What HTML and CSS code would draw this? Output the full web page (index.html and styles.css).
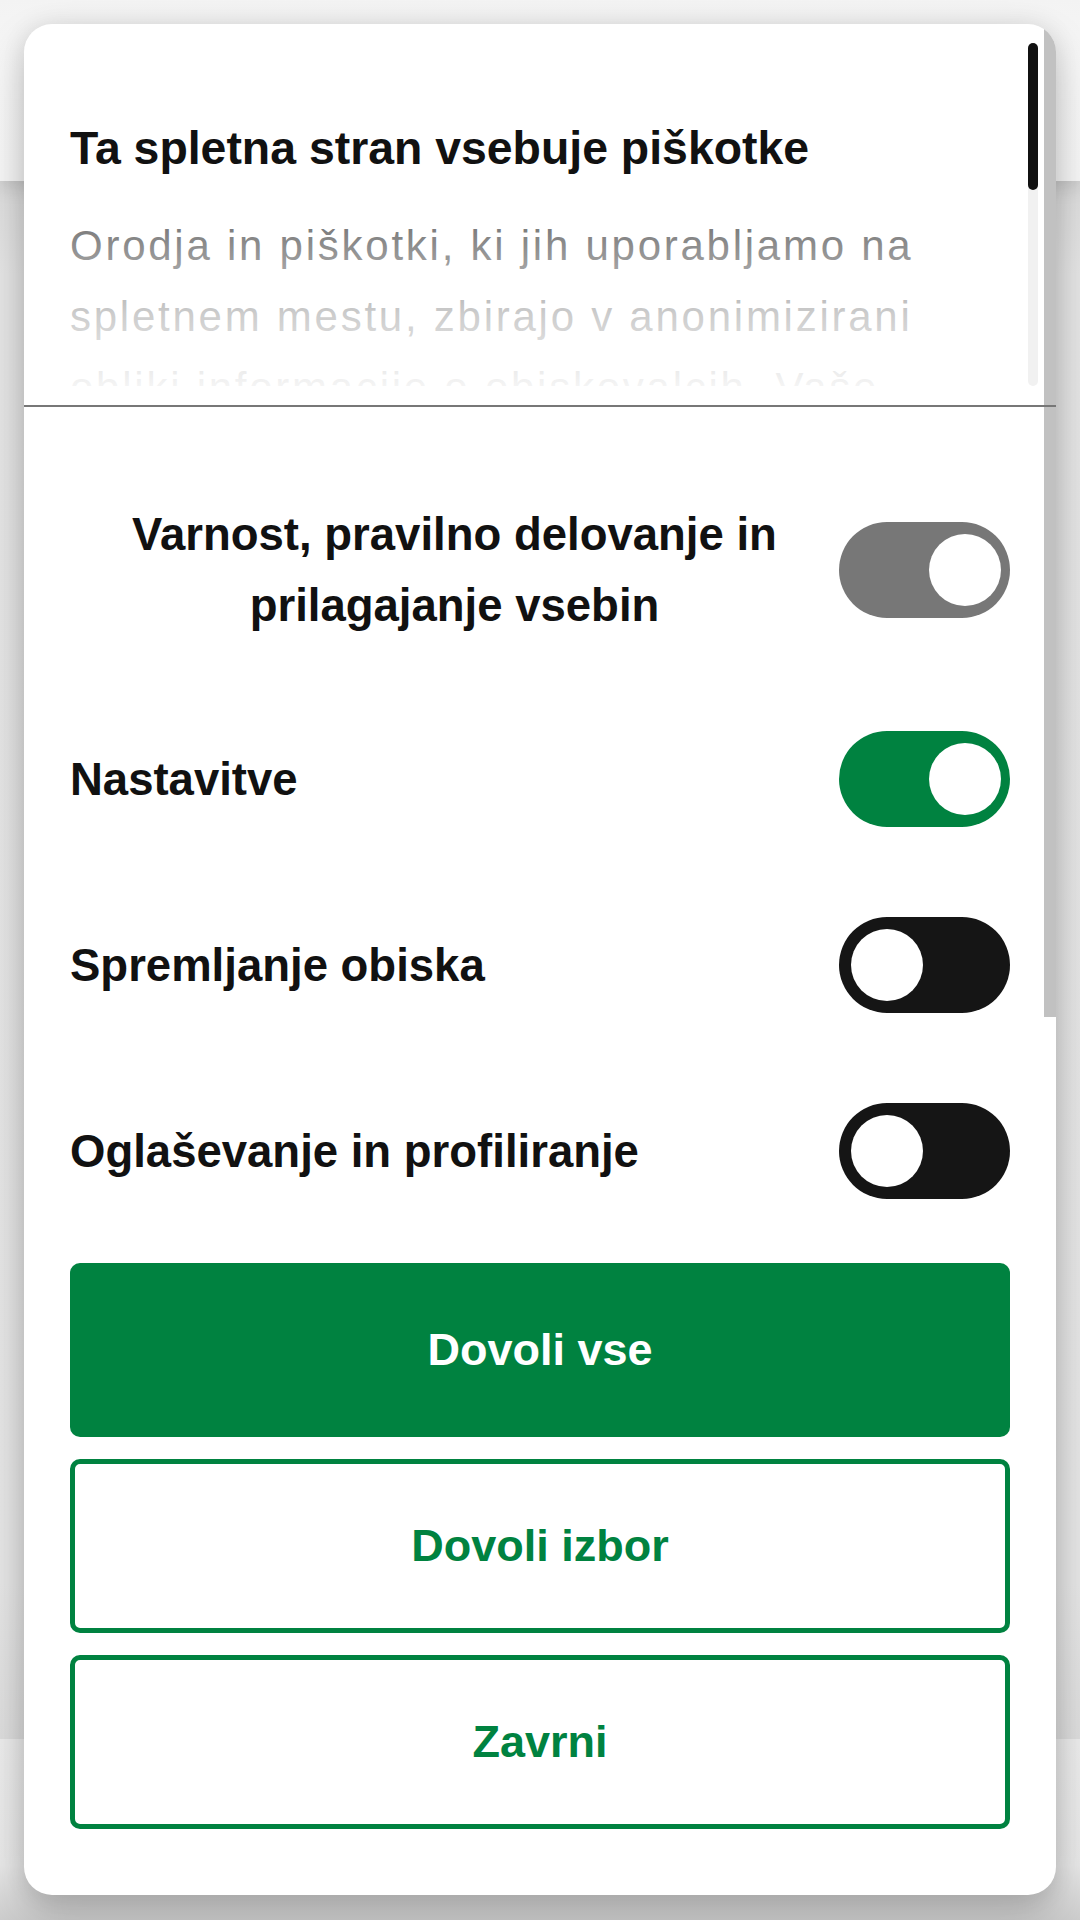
FILE: index.html
```html
<!DOCTYPE html>
<html lang="sl">
<head>
<meta charset="utf-8">
<title>Piškotki</title>
<link rel="stylesheet" href="styles.css">
</head>
<body>
<div class="page">
  <header class="page-header"></header>
  <main class="page-main"></main>
  <footer class="page-footer"></footer>
</div>

<div class="modal" role="dialog" aria-labelledby="cookie-title">
  <div class="modal-scrollbar"></div>
  <section class="intro">
    <div class="intro-text">
      <h1 id="cookie-title" class="intro-title">Ta spletna stran vsebuje piškotke</h1>
      <p class="intro-desc">Orodja in piškotki, ki jih uporabljamo na spletnem mestu, zbirajo v anonimizirani obliki informacije o obiskovalcih. Vaše soglasje lahko kadarkoli spremenite v nastavitvah.</p>
      <div class="intro-fade"></div>
    </div>
    <div class="intro-scroll"><div class="intro-thumb"></div></div>
  </section>
  <div class="divider"></div>
  <section class="options">
    <div class="option option--center">
      <span class="option-label">Varnost, pravilno delovanje in prilagajanje vsebin</span>
      <span class="toggle toggle--locked"><span class="knob"></span></span>
    </div>
    <div class="option">
      <span class="option-label">Nastavitve</span>
      <span class="toggle toggle--on"><span class="knob"></span></span>
    </div>
    <div class="option">
      <span class="option-label">Spremljanje obiska</span>
      <span class="toggle toggle--off"><span class="knob"></span></span>
    </div>
    <div class="option">
      <span class="option-label">Oglaševanje in profiliranje</span>
      <span class="toggle toggle--off"><span class="knob"></span></span>
    </div>
    <div class="actions">
      <button class="btn btn--primary">Dovoli vse</button>
      <button class="btn btn--outline">Dovoli izbor</button>
      <button class="btn btn--outline">Zavrni</button>
    </div>
  </section>
</div>
</body>
</html>
```

FILE: styles.css
```css
* { box-sizing: border-box; }

html, body {
  margin: 0;
  padding: 0;
}

body {
  width: 1080px;
  height: 1920px;
  overflow: hidden;
  background: #e4e4e4;
  font-family: "Liberation Sans", Arial, sans-serif;
  position: relative;
}

.page {
  display: flex;
  flex-direction: column;
  height: 1920px;
}

.page-header {
  height: 181px;
  background: linear-gradient(to bottom, #f3f3f3 0%, #f7f7f7 40%, #f6f6f6 100%);
  box-shadow: 0 6px 18px rgba(0, 0, 0, 0.12);
  position: relative;
  z-index: 1;
}

.page-main {
  flex: 1;
  background: linear-gradient(to bottom, #dcdcdc 0%, #e5e5e5 6%, #e6e6e6 90%, #dddddd 100%);
}

.page-footer {
  height: 181px;
  background: linear-gradient(to bottom, #ececec 0%, #e8e8e8 70%, #cdcdcd 100%);
}

/* modal */
.modal {
  position: absolute;
  top: 24px;
  left: 24px;
  width: 1032px;
  height: 1871px;
  background: #ffffff;
  border-radius: 28px;
  overflow: hidden;
  box-shadow: 0 18px 40px rgba(0, 0, 0, 0.22), 0 0 24px rgba(0, 0, 0, 0.08);
  z-index: 5;
}

.modal-scrollbar {
  position: absolute;
  top: 0;
  right: 0;
  width: 12px;
  height: 993px;
  background: #c1c1c1;
  z-index: 1;
}

.intro {
  display: flex;
  height: 381px;
  padding-top: 19px;
  padding-bottom: 19px;
}

.intro-text {
  flex: 1;
  position: relative;
  overflow: hidden;
  padding: 77px 50px 0 46px;
}

.intro-title {
  margin: 0;
  font-size: 46.4px;
  line-height: 56px;
  font-weight: 700;
  color: #111111;
}

.intro-desc {
  margin: 34px 0 0 0;
  font-size: 42px;
  line-height: 71px;
  letter-spacing: 2.75px;
  color: #7a7a7a;
}

.intro-fade {
  position: absolute;
  left: 0;
  right: 0;
  top: 0;
  bottom: 0;
  background: linear-gradient(to bottom,
    rgba(255, 255, 255, 0) 0%,
    rgba(255, 255, 255, 0) 53%,
    rgba(255, 255, 255, 0.62) 79%,
    rgba(255, 255, 255, 0.92) 100%);
}

.intro-scroll {
  width: 10px;
  margin-right: 18px;
  background: #f1f1f1;
  border-radius: 5px;
}

.intro-thumb {
  height: 147px;
  background: #111111;
  border-radius: 5px;
}

.divider {
  position: relative;
  z-index: 2;
  height: 2px;
  background: #777777;
}

.options {
  display: flex;
  flex-direction: column;
  padding: 92px 46px 66px 46px;
  gap: 90px;
}

.option {
  display: flex;
  align-items: center;
  justify-content: space-between;
}

.option-label {
  flex: 1;
  font-size: 45.5px;
  line-height: 71px;
  font-weight: 700;
  color: #111111;
}

.option--center .option-label {
  text-align: center;
}

.toggle {
  flex: 0 0 171px;
  width: 171px;
  height: 96px;
  border-radius: 48px;
  display: flex;
  align-items: center;
}

.knob {
  width: 72px;
  height: 72px;
  border-radius: 50%;
  background: #ffffff;
}

.toggle--locked {
  background: #777777;
  justify-content: flex-end;
  padding-right: 9px;
}

.toggle--on {
  background: #008240;
  justify-content: flex-end;
  padding-right: 9px;
}

.toggle--off {
  background: #151515;
  justify-content: flex-start;
  padding-left: 12px;
}

.actions {
  display: flex;
  flex-direction: column;
  gap: 22px;
  margin-top: -26px;
}

.btn {
  height: 174px;
  width: 100%;
  border-radius: 10px;
  font-family: "Liberation Sans", Arial, sans-serif;
  font-size: 45px;
  font-weight: 700;
  cursor: pointer;
}

.btn--primary {
  background: #008240;
  color: #ffffff;
  border: none;
}

.btn--outline {
  background: #ffffff;
  color: #008240;
  border: 5px solid #008240;
}
```
